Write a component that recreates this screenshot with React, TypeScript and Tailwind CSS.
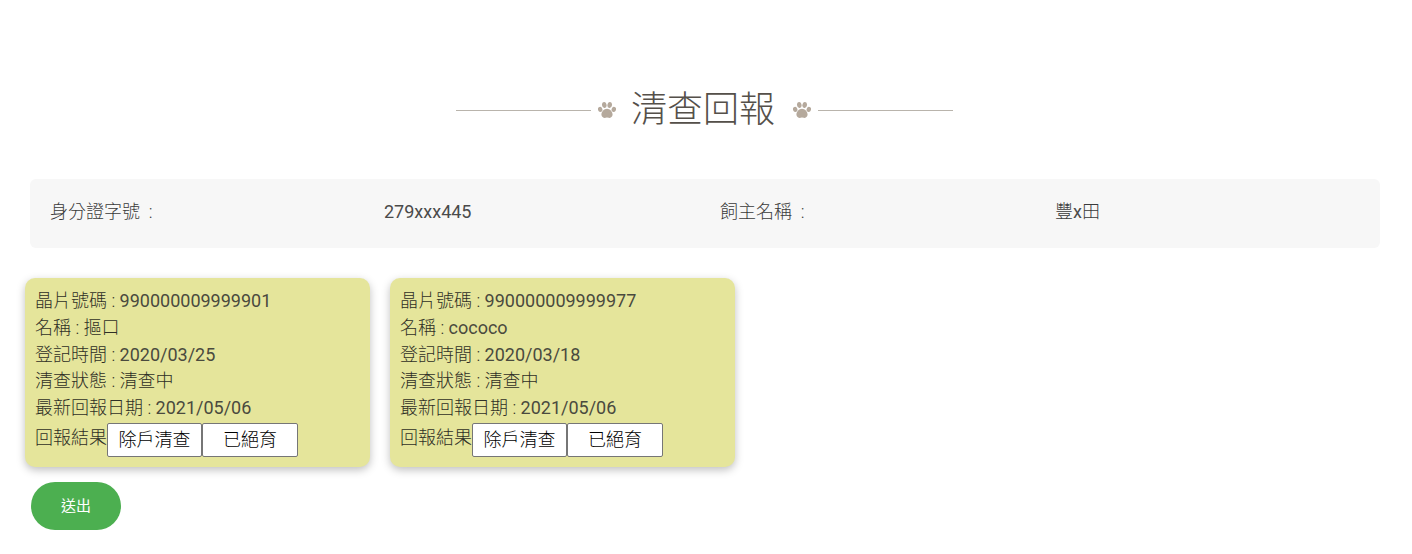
// App.tsx — 清查回報 page
import React from 'react';

const FONT = "font-['Roboto','Noto_Sans_CJK_TC',sans-serif]";

const Paw: React.FC = () => (
  <svg viewBox="0 0 18 16" className="h-4 w-[18px] shrink-0 fill-[#b5a99c]">
    <ellipse cx="2.200" cy="7.400" rx="2.200" ry="2.500" transform="rotate(-20 2.200 7.400)" />
    <ellipse cx="6.300" cy="3" rx="2.300" ry="3" transform="rotate(-8 6.300 3)" />
    <ellipse cx="11.700" cy="3" rx="2.300" ry="3" transform="rotate(8 11.700 3)" />
    <ellipse cx="15.800" cy="7.400" rx="2.200" ry="2.500" transform="rotate(20 15.800 7.400)" />
    <path d="M9 6.800c2.800 0 5.600 3 5.600 5.800 0 2.400-2 3.400-3.400 3.400-1 0-1.400-.4-2.200-.4s-1.200.4-2.200.4c-1.400 0-3.400-1-3.400-3.400C3.400 9.800 6.200 6.800 9 6.800z" />
  </svg>
);

interface Report {
  chip: string;
  name: string;
  registered: string;
}

const reports: Report[] = [
  { chip: '990000009999901', name: '摳口', registered: '2020/03/25' },
  { chip: '990000009999977', name: 'cococo', registered: '2020/03/18' },
];

const Label: React.FC<{ children: React.ReactNode }> = ({ children }) => (
  <span className="font-light text-[#2f2f26]">{children}</span>
);

const ReportCard: React.FC<{ report: Report }> = ({ report }) => (
  <div className="h-[189px] w-[345px] rounded-[10px] bg-[#e5e59b] px-[10px] pt-[10px] text-[18px] leading-[26.8px] text-[#4a4a3e] shadow-[0_3px_8px_rgba(0,0,0,0.25)]">
    <div><Label>晶片號碼 : </Label>{report.chip}</div>
    <div><Label>名稱 : </Label>{report.name === 'cococo' ? report.name : <Label>{report.name}</Label>}</div>
    <div><Label>登記時間 : </Label>{report.registered}</div>
    <div><Label>清查狀態 : 清查中</Label></div>
    <div><Label>最新回報日期 : </Label>2021/05/06</div>
    <div className="mt-px flex items-start">
      <span className="w-[72px] shrink-0 pt-[2px] leading-[26px] font-light whitespace-nowrap text-[#2f2f26]">回報結果</span>
      <button type="button" className="h-[34px] w-[95px] rounded-[2px] border border-[#767676] bg-white text-[18px] leading-none font-light text-black">
        除戶清查
      </button>
      <button type="button" className="h-[34px] w-[96px] rounded-[2px] border border-[#767676] bg-white text-[18px] leading-none font-light text-black">
        已絕育
      </button>
    </div>
  </div>
);

export default function App() {
  return (
    <div className={`${FONT} min-h-[554px] bg-white`}>
      <div className="flex items-center pt-[84px] pl-[456px]">
        <div className="h-px w-[135px] bg-[#b9b4ac]" />
        <div className="ml-[7px]"><Paw /></div>
        <h1 className="mr-[18px] ml-[15px] w-[144px] text-[36px] leading-[52px] font-light text-[#55504a]">清查回報</h1>
        <Paw />
        <div className="ml-[7px] h-px w-[135px] bg-[#b9b4ac]" />
      </div>

      <div className="mx-[30px] mt-[43px] grid h-[69px] w-[1350px] grid-cols-[334px_336px_335px_335px] items-center rounded-[6px] bg-[#f7f7f7] pb-1 pl-5 text-[18px] leading-[26px] text-[#4a4a4a]">
        <div className="font-light text-[#3a3a3a]">身分證字號&nbsp; :</div>
        <div>279xxx445</div>
        <div className="font-light text-[#3a3a3a]">飼主名稱&nbsp; :</div>
        <div><span className="font-light text-[#3a3a3a]">豐</span>x<span className="font-light text-[#3a3a3a]">田</span></div>
      </div>

      <div className="mt-[30px] ml-[25px] flex gap-5">
        {reports.map((r) => (
          <ReportCard key={r.chip} report={r} />
        ))}
      </div>

      <button type="button" className="mt-[15px] ml-[31px] block h-12 w-[90px] rounded-full bg-[#4caf50] text-[15px] text-white">
        送出
      </button>
    </div>
  );
}
